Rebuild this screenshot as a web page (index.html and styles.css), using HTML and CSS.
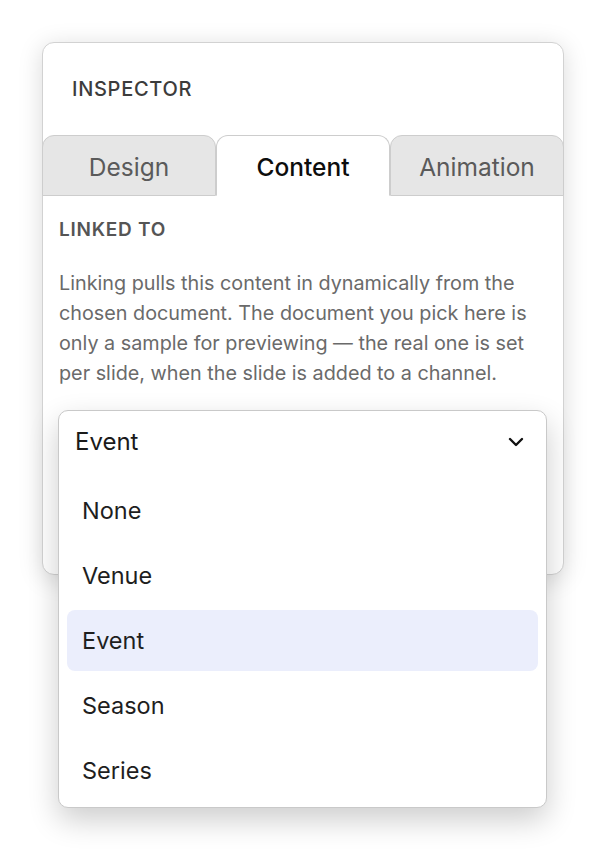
FILE: index.html
```html
<!DOCTYPE html>
<html lang="en">
<head>
<meta charset="utf-8">
<title>Inspector</title>
<link rel="stylesheet" href="styles.css">
</head>
<body>
<div class="card">
  <div class="header">INSPECTOR</div>
  <div class="tabs">
    <div class="tab">Design</div>
    <div class="tab active">Content</div>
    <div class="tab">Animation</div>
  </div>
  <div class="body">
    <div class="label">LINKED TO</div>
    <p class="desc">Linking pulls this content in dynamically from the chosen document. The document you pick here is only a sample for previewing — the real one is set per slide, when the slide is added to a channel.</p>
    <div class="select-wrap">
      <div class="combo">
        <div class="trigger">
          <span>Event</span>
          <svg class="chev" width="16" height="10" viewBox="0 0 16 10"><path d="M2 2 L8 8 L14 2" fill="none" stroke="#111" stroke-width="2.4" stroke-linecap="round" stroke-linejoin="round"/></svg>
        </div>
        <ul class="list">
          <li class="item">None</li>
          <li class="item">Venue</li>
          <li class="item selected">Event</li>
          <li class="item">Season</li>
          <li class="item">Series</li>
        </ul>
      </div>
    </div>
  </div>
</div>
</body>
</html>
```
FILE: styles.css
```css
* { box-sizing: border-box; }
html { height: 100%; margin: 0; background: #fff; }
body {
  margin: 0;
  min-height: 854px;
  background: #fff;
  padding: 42px 45px 0 42px;
  font-family: Inter, "Noto Sans", "Liberation Sans", sans-serif;
}
.card {
  width: 522px;
  height: 533px;
  border: 1px solid #d2d2d2;
  border-radius: 12px;
  background: #fff;
  box-shadow: 0 4px 24px rgba(0,0,0,0.15);
}
.header {
  height: 92px;
  display: flex;
  align-items: center;
  padding-left: 29px;
  font-size: 20px;
  font-weight: 500;
  letter-spacing: 0.035em;
  color: #3c3c3c;
}
.tabs {
  display: flex;
  height: 61px;
  margin: 0 -1px;
}
.tab {
  flex: 1;
  display: flex;
  align-items: center;
  justify-content: center;
  background: #e6e6e6;
  border: 1px solid #cdcdcd;
  border-radius: 12px 12px 0 0;
  font-size: 24.5px;
  color: #5a5a5a;
  padding-top: 2px;
}
.tab.active {
  background: #fff;
  border-bottom-color: #fff;
  color: #0d0d0d;
  font-weight: 500;
}
.body {
  padding: 22px 16px 0 16px;
}
.label {
  font-size: 19px;
  line-height: 24px;
  font-weight: 600;
  letter-spacing: 0.04em;
  color: #555;
}
.desc {
  margin: 26px 0 0 0;
  font-size: 19.8px;
  line-height: 30px;
  color: #6a6a6a;
}
.select-wrap {
  position: relative;
  height: 62px;
  margin-top: 22px;
}
.combo {
  position: absolute;
  top: 0;
  left: -1px;
  right: 0;
  background: #fff;
  border: 1px solid #c9c9c9;
  border-radius: 10px;
  box-shadow: 0 12px 30px rgba(0,0,0,0.2);
  z-index: 2;
}
.trigger {
  height: 61px;
  display: flex;
  align-items: center;
  justify-content: space-between;
  padding: 0 22px 0 16px;
  font-size: 24px;
  color: #1a1a1a;
}
.chev { display: block; }
.list {
  list-style: none;
  margin: 0;
  padding: 8px 8px 6px 8px;
}
.item {
  height: 61px;
  margin-bottom: 4px;
  display: flex;
  align-items: center;
  padding-left: 15px;
  border-radius: 8px;
  font-size: 23.5px;
  color: #1e1e1e;
}
.item:last-child { margin-bottom: 0; }
.item.selected { background: #ebeefc; }
```
